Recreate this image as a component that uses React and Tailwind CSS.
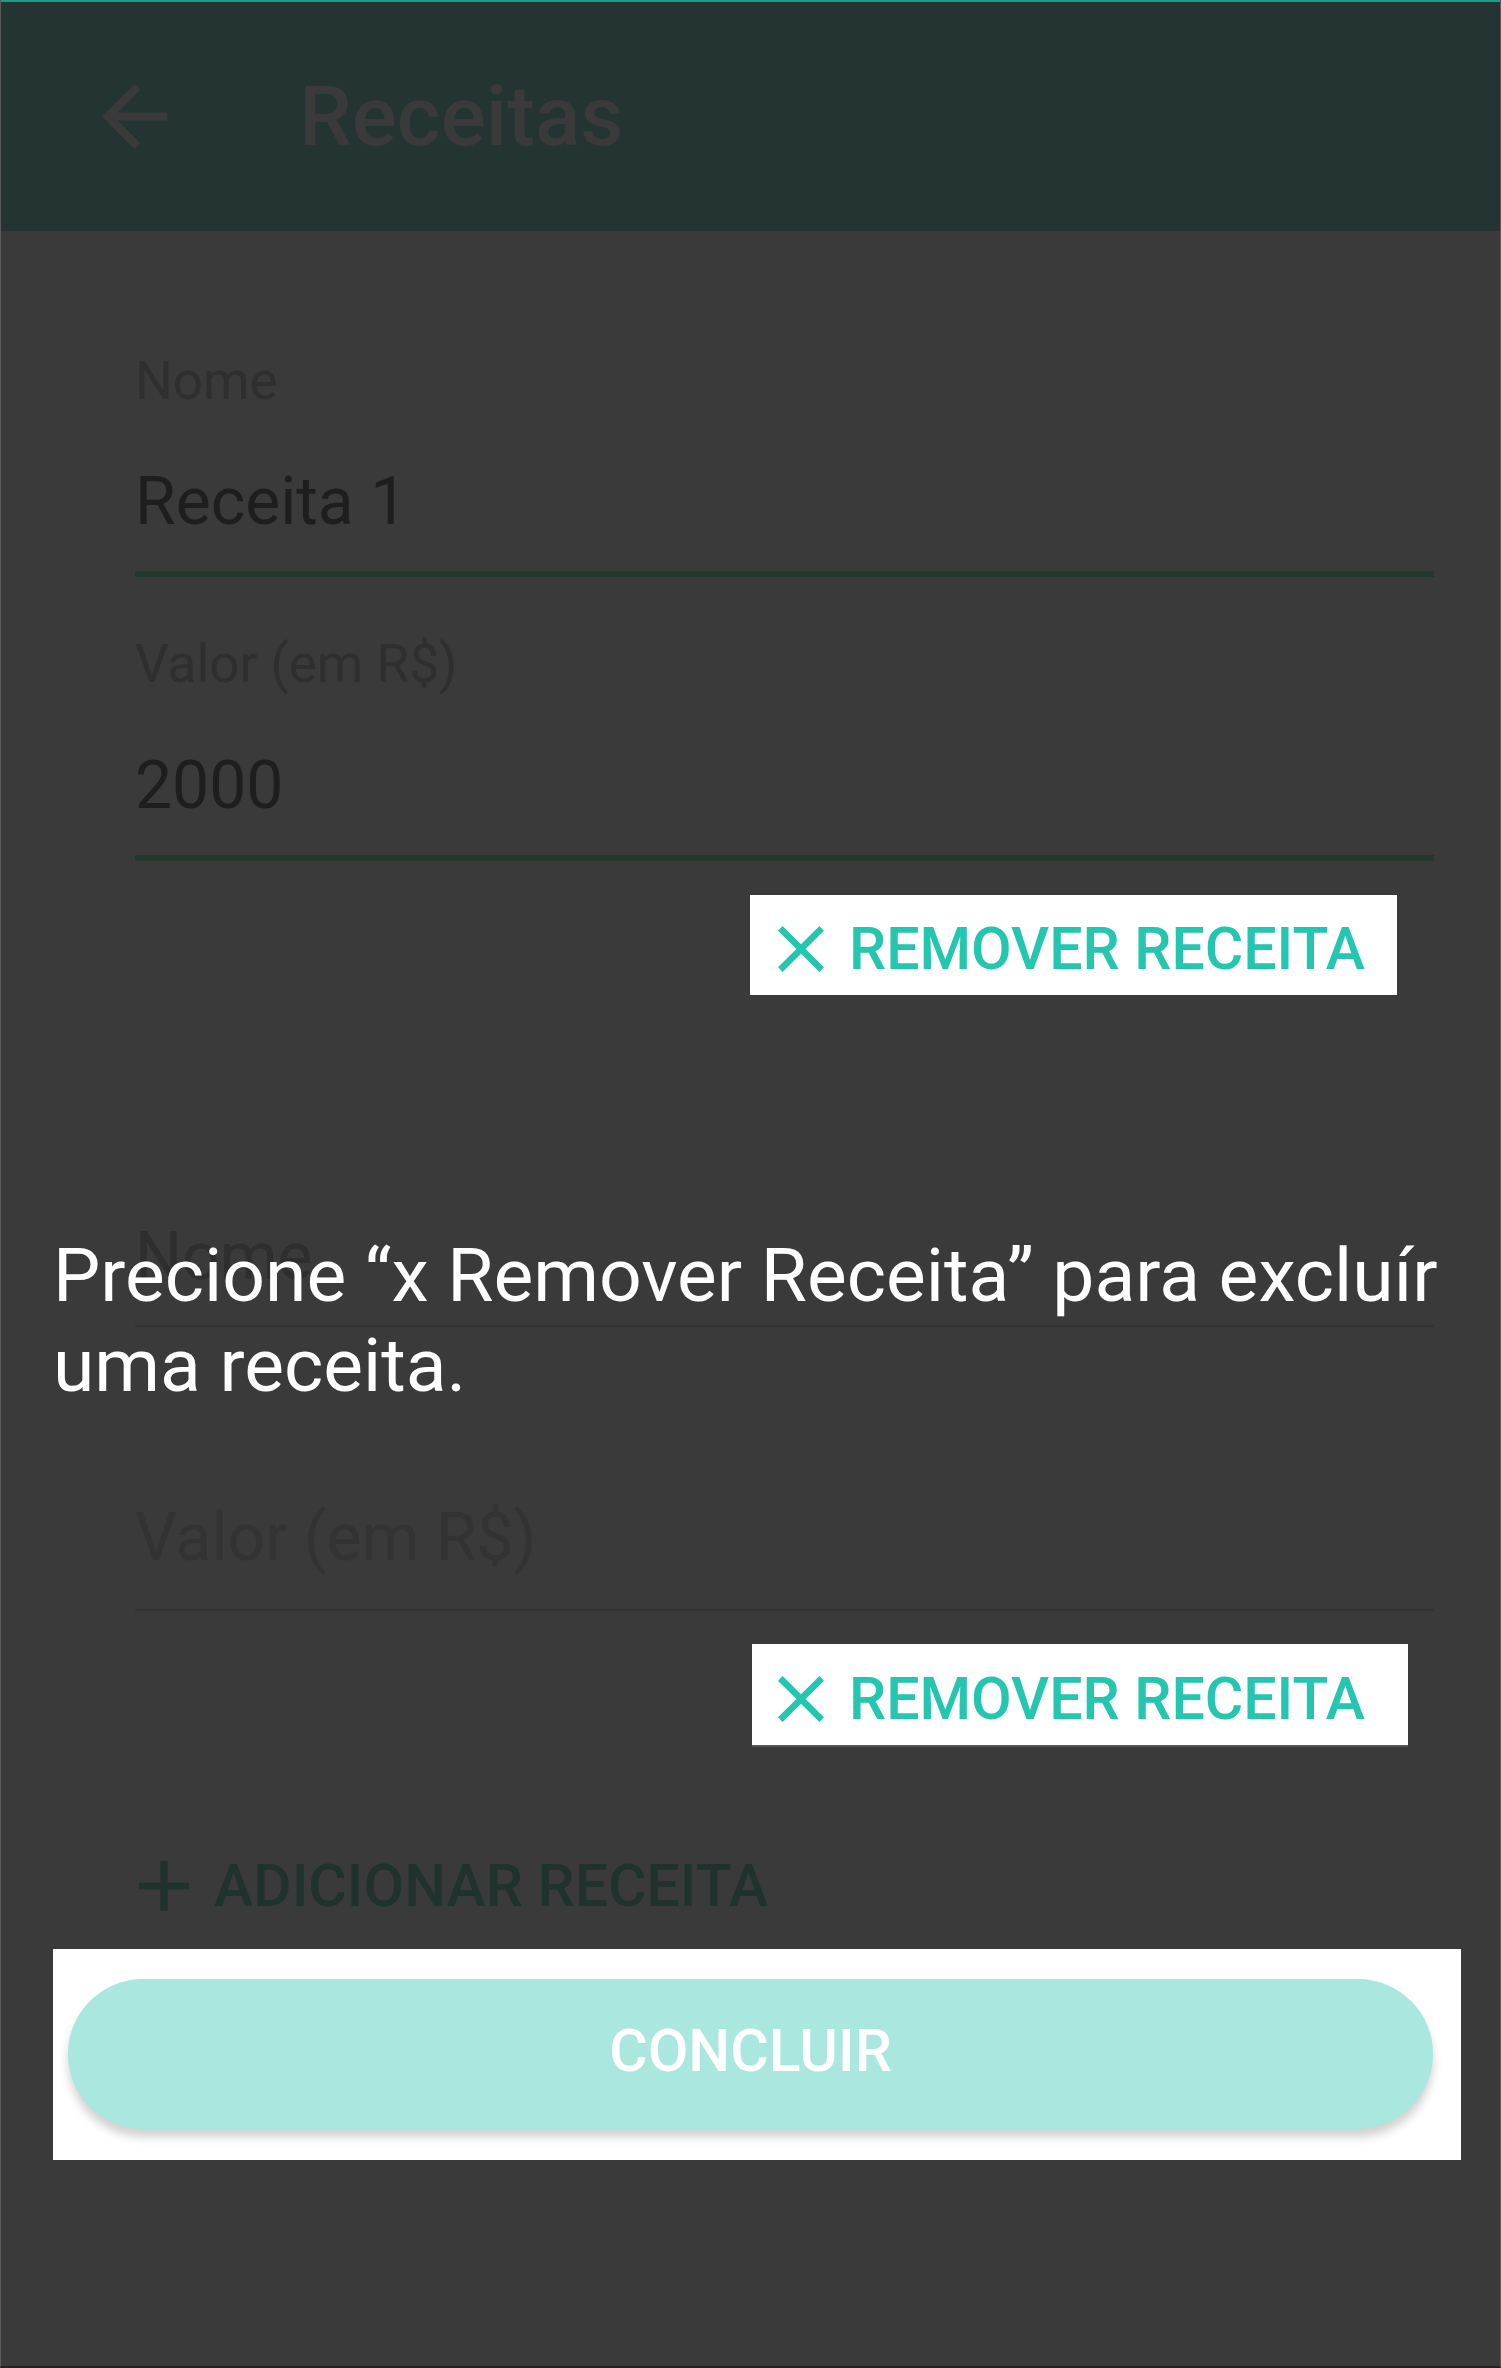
import React from 'react';

const CloseIcon = ({ className }) => (
  <svg viewBox="5 5 14 14" className={className} fill="currentColor">
    <path d="M19 6.41L17.59 5 12 10.59 6.41 5 5 6.41 10.59 12 5 17.59 6.41 19 12 13.41 17.59 19 19 17.59 13.41 12z" />
  </svg>
);

const RemoveButton = ({ wide }) => (
  <div
    className={
      wide
        ? 'ml-[617px] mt-[33px] h-[103px] w-[656px] bg-white flex items-center pl-[26px] pt-[8px] border-b-2 border-[#555]'
        : 'ml-[615px] mt-[34px] h-[100px] w-[647px] bg-white flex items-center pl-[28px] pt-[7px]'
    }
  >
    <CloseIcon className="w-[46px] h-[46px] text-[#25c6af]" />
    <span className="ml-[25px] text-[59px] leading-[59px] font-medium text-[#25c6af]">REMOVER RECEITA</span>
  </div>
);

export default function App() {
  return (
    <div
      className="relative w-[1501px] h-[2368px] bg-[#3a3a3a] border-l border-r border-[#5a5a5a] border-b-2 border-b-[#232323] overflow-hidden"
      style={{ fontFamily: 'Roboto, "Noto Sans", sans-serif' }}
    >
      {/* header */}
      <div className="h-[2px] bg-[#1a9c88]" />
      <div className="h-[229px] bg-[#233432] flex items-center">
        <svg viewBox="4 4 16 16" className="ml-[101px] w-[65px] h-[65px] text-[#3a3a3a]" fill="currentColor">
          <path d="M20 11H7.83l5.59-5.59L12 4l-8 8 8 8 1.41-1.41L7.83 13H20v-2z" />
        </svg>
        <h1 className="ml-[132px] text-[84px] leading-[84px] font-medium text-[#3a3a3a]">Receitas</h1>
      </div>

      {/* receitas */}
      <div className="pl-[134px]">
        <div className="mt-[122px] text-[53px] leading-[56px] h-[56px] text-[#2f2f2f]">Nome</div>
        <div className="mt-[60px] text-[66px] leading-[65px] h-[65px] text-[#1e1e1e]">Receita 1</div>
        <div className="mt-[37px] h-[6px] w-[1299px] bg-[#23372d]" />
        <div className="mt-[59px] text-[53px] leading-[56px] h-[56px] text-[#2f2f2f]">Valor (em R$)</div>
        <div className="mt-[61px] text-[66px] leading-[65px] h-[65px] text-[#1e1e1e]">2000</div>
        <div className="mt-[37px] h-[6px] w-[1299px] bg-[#23372d]" />
        <RemoveButton />

        <div className="mt-[229px] text-[66px] leading-[65px] h-[65px] text-[#2e2e2e]">Nome</div>
        <div className="mt-[36px] h-[2px] w-[1299px] bg-[#333333]" />
        <div className="mt-[178px] text-[66px] leading-[65px] h-[65px] text-[#333333]">Valor (em R$)</div>
        <div className="mt-[39px] h-[2px] w-[1299px] bg-[#333333]" />
        <RemoveButton wide />

        <div className="mt-[114px] h-[50px] flex items-center text-[#1f322e]">
          <svg viewBox="5 5 14 14" className="ml-[4px] w-[50px] h-[50px]" fill="currentColor">
            <path d="M19 13h-6v6h-2v-6H5v-2h6V5h2v6h6v2z" />
          </svg>
          <span className="ml-[25px] text-[59px] leading-[50px] font-medium">ADICIONAR RECEITA</span>
        </div>
      </div>

      {/* concluir em destaque */}
      <div className="ml-[52px] mt-[38px] w-[1408px] h-[211px] bg-white pt-[30px] pl-[15px]">
        <div className="w-[1365px] h-[150px] rounded-full bg-[#aae7df] shadow-[0_8px_10px_rgba(0,0,0,0.18)] flex items-center justify-center pb-[8px]">
          <span className="text-[59px] leading-[59px] font-medium text-white">CONCLUIR</span>
        </div>
      </div>

      {/* dica */}
      <p className="absolute left-[52px] top-[1230px] w-[1396px] text-[75px] leading-[90px] text-white">
        Precione “x Remover Receita” para excluír uma receita.
      </p>
    </div>
  );
}
